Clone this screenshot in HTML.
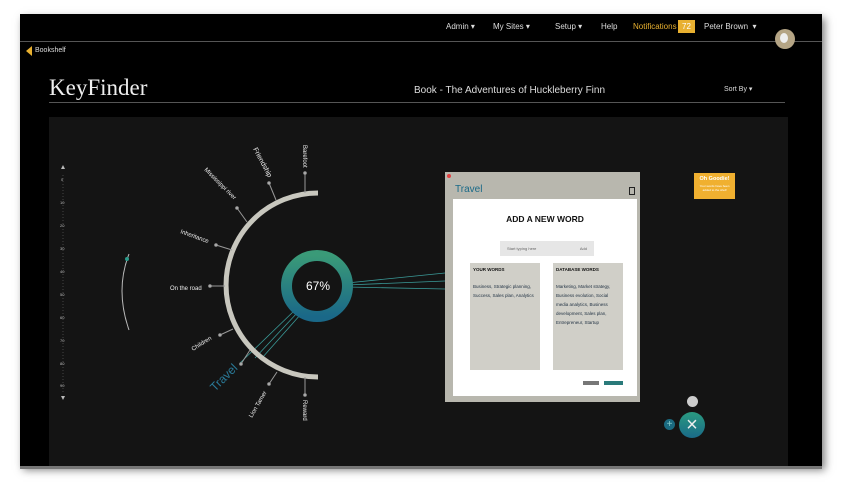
<!DOCTYPE html>
<html><head><meta charset="utf-8"><style>
body{margin:0;width:844px;height:501px;background:#fff;position:relative;overflow:hidden;font-family:"Liberation Sans",sans-serif}
.win{position:absolute;left:20px;top:14px;width:802px;height:452px;background:#000;box-shadow:3px 4px 8px rgba(0,0,0,.5)}
.nav{position:absolute;top:22px;font-size:8px;color:#ddd}
.abs{position:absolute}
</style></head><body>
<div class="win"></div>
<div class="abs" style="left:20px;top:41px;width:802px;height:1px;background:#555"></div>
<div class="nav" style="left:446px">Admin ▾</div>
<div class="nav" style="left:493px">My Sites ▾</div>
<div class="nav" style="left:555px">Setup ▾</div>
<div class="nav" style="left:601px">Help</div>
<div class="nav" style="left:633px;color:#e8b030">Notifications</div>
<div class="abs" style="left:678px;top:20px;width:17px;height:13px;background:#e8b030;color:#fff;font-size:8px;text-align:center;line-height:13px">72</div>
<div class="nav" style="left:704px">Peter Brown &nbsp;▾</div>
<div class="abs" style="left:775px;top:29px;width:20px;height:20px;border-radius:50%;background:#b5a585"></div>
<div class="abs" style="left:780px;top:33px;width:8px;height:10px;border-radius:50%;background:#eee"></div>
<div class="abs" style="left:26px;top:46px;width:0;height:0;border-top:5px solid transparent;border-bottom:5px solid transparent;border-right:6px solid #e8b030"></div>
<div class="abs" style="left:35px;top:47px;font-size:7px;color:#ddd">Bookshelf</div>
<div class="abs" style="left:49px;top:75px;font-family:'Liberation Serif',serif;font-size:23px;color:#eee">KeyFinder</div>
<div class="abs" style="left:414px;top:85px;font-size:10px;color:#ddd">Book - The Adventures of Huckleberry Finn</div>
<div class="abs" style="left:724px;top:85px;font-size:7px;color:#ddd">Sort By ▾</div>
<div class="abs" style="left:49px;top:102px;width:736px;height:1px;background:#555"></div>
<div class="abs" style="left:49px;top:117px;width:739px;height:349px;background:#141414"></div>
<div class="abs" style="left:20px;top:466px;width:802px;height:3px;background:#777"></div>
<svg class="abs" style="left:0;top:0" width="844" height="501" font-family="Liberation Sans,sans-serif">
<defs><linearGradient id="g" x1="0" y1="0" x2="0" y2="1"><stop offset="0" stop-color="#3a9a78"/><stop offset="1" stop-color="#1a6888"/></linearGradient></defs>
<g fill="#bbb" font-size="4">
<polygon points="61,169 65,169 63,165" /><polygon points="61,396 65,396 63,400"/>
<line x1="63" y1="175" x2="63" y2="392" stroke="#444" stroke-dasharray="1 2"/>
<text x="61" y="181">0</text><text x="60" y="204">10</text><text x="60" y="227">20</text><text x="60" y="250">30</text><text x="60" y="273">40</text><text x="60" y="296">50</text><text x="60" y="319">60</text><text x="60" y="342">70</text><text x="60" y="365">80</text><text x="60" y="387">90</text>
</g>
<path d="M129,254 Q115,290 129,330" stroke="#bbb" stroke-width="1" fill="none"/>
<circle cx="127" cy="259" r="2" fill="#2a9a8a"/>
<g stroke="#3a9a98" stroke-width="0.8">
<line x1="347" y1="283" x2="445" y2="273"/><line x1="347" y1="285" x2="445" y2="281"/><line x1="347" y1="287" x2="445" y2="289"/>
<line x1="295" y1="310" x2="240" y2="363"/><line x1="298" y1="312" x2="255" y2="358"/><line x1="301" y1="314" x2="262" y2="358"/>
</g>
<path d="M313,193 A92,92 0 0 0 313,377" stroke="#c8c7be" stroke-width="5" fill="none" transform="translate(5,0)"/>
<g stroke="#999" stroke-width="1" fill="#bbb">
<line x1="305" y1="193" x2="305" y2="173"/><circle cx="305" cy="173" r="1.3"/>
<line x1="276" y1="200" x2="269" y2="183"/><circle cx="269" cy="183" r="1.3"/>
<line x1="247" y1="222" x2="237" y2="208"/><circle cx="237" cy="208" r="1.3"/>
<line x1="232" y1="250" x2="216" y2="245"/><circle cx="216" cy="245" r="1.3"/>
<line x1="225" y1="286" x2="210" y2="286"/><circle cx="210" cy="286" r="1.3"/>
<line x1="233" y1="329" x2="220" y2="335"/><circle cx="220" cy="335" r="1.3"/>
<line x1="250" y1="350" x2="241" y2="364"/><circle cx="241" cy="364" r="1.3"/>
<line x1="277" y1="372" x2="269" y2="384"/><circle cx="269" cy="384" r="1.3"/>
<line x1="305" y1="377" x2="305" y2="395"/><circle cx="305" cy="395" r="1.3"/>
</g>
<g fill="#eee" font-size="6">
<text transform="translate(303,145) rotate(90)">Barefoot</text>
<text transform="translate(253,149) rotate(62)" font-size="7">Friendship</text>
<text transform="translate(204,170) rotate(45)">Mississippi river</text>
<text transform="translate(180,233) rotate(20)">Inheritance</text>
<text x="170" y="290">On the road</text>
<text transform="translate(193,351) rotate(-32)">Children</text>
<text transform="translate(215,392) rotate(-45)" font-size="12" fill="#2a7a98">Travel</text>
<text transform="translate(252,418) rotate(-60)">Lion Tamer</text>
<text transform="translate(303,400) rotate(90)">Reward</text>
</g>
<circle cx="317" cy="286" r="30.5" stroke="url(#g)" stroke-width="11" fill="#141414"/>
<text x="306" y="290" fill="#fff" font-size="12">67%</text>
</svg>
<div class="abs" style="left:445px;top:172px;width:195px;height:230px;background:#b8b7ae"></div>
<div class="abs" style="left:447px;top:174px;width:4px;height:4px;border-radius:50%;background:#e04040"></div>
<div class="abs" style="left:455px;top:184px;font-size:10px;color:#1a6a88">Travel</div>
<div class="abs" style="left:629px;top:187px;width:4px;height:6px;border:1px solid #222"></div>
<div class="abs" style="left:453px;top:199px;width:184px;height:197px;background:#fff"></div>
<div class="abs" style="left:453px;top:214px;width:184px;text-align:center;font-size:8.5px;font-weight:bold;color:#111">ADD A NEW WORD</div>
<div class="abs" style="left:500px;top:241px;width:94px;height:15px;background:#e6e6e6;font-size:4px;color:#666;line-height:15px"><span style="margin-left:7px">Start typing here</span><span style="float:right;margin-right:7px">Add</span></div>
<div class="abs" style="left:470px;top:263px;width:70px;height:107px;background:#d0cfc8;font-size:4.5px;color:#111"><div style="margin:4px 3px;font-weight:bold">YOUR WORDS</div><div style="margin:10px 3px;line-height:9px;color:#234">Business, Strategic planning, Success, Sales plan, Analytics</div></div>
<div class="abs" style="left:553px;top:263px;width:70px;height:107px;background:#d0cfc8;font-size:4.5px;color:#111"><div style="margin:4px 3px;font-weight:bold">DATABASE WORDS</div><div style="margin:10px 3px;line-height:9px;color:#234">Marketing, Market strategy, Business evolution, Social media analytics, Business development, Sales plan, Entrepreneur, Startup</div></div>
<div class="abs" style="left:583px;top:381px;width:16px;height:4px;background:#777"></div>
<div class="abs" style="left:604px;top:381px;width:19px;height:4px;background:#2a7a7a"></div>
<div class="abs" style="left:694px;top:173px;width:41px;height:26px;background:#f0b030;color:#fff;text-align:center"><div style="font-size:5.5px;font-weight:bold;margin-top:3px">Oh Goodie!</div><div style="font-size:3px;margin-top:2px">Your words have been<br>added to the shelf</div></div>
<div class="abs" style="left:687px;top:396px;width:11px;height:11px;border-radius:50%;background:#ccc"></div>
<div class="abs" style="left:664px;top:419px;width:11px;height:11px;border-radius:50%;background:#1a6a80;color:#8cc;font-size:10px;line-height:11px;text-align:center">+</div>
<div class="abs" style="left:679px;top:412px;width:26px;height:26px;border-radius:50%;background:linear-gradient(#2a9a80,#1a6a88);color:#eee;font-size:20px;line-height:26px;text-align:center">×</div>
</body></html>
